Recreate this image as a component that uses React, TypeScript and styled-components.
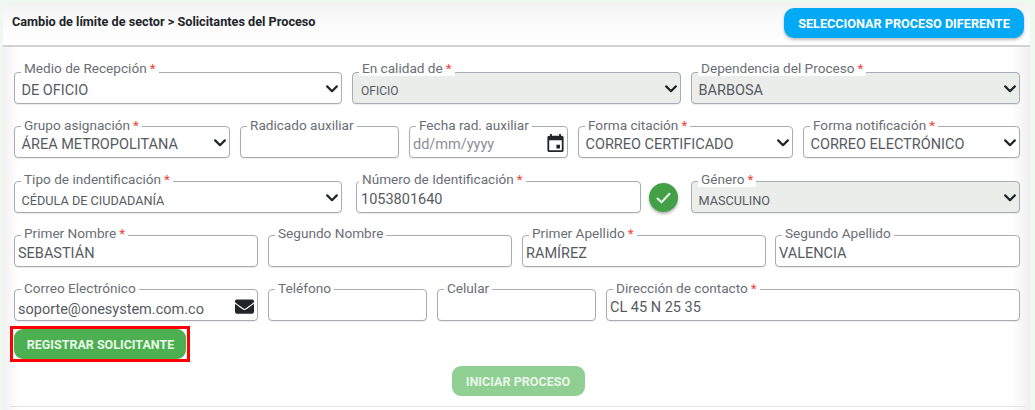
import React from 'react';
import styled, { createGlobalStyle } from 'styled-components';
import { FaEnvelope } from 'react-icons/fa';

const Global = createGlobalStyle`
  html, body { margin: 0; padding: 0; background: #eefaf0; }
  body { font-family: Roboto, "Liberation Sans", sans-serif; width: 1035px; height: 410px; overflow: hidden; }
  * { box-sizing: border-box; }
`;

const Panel = styled.div`
  margin: 3px 0 0 3px;
  width: 1027px;
  height: 407px;
  border-radius: 5px 5px 0 0;
  background: linear-gradient(90deg, #f1f1f1 0, #fff 16px, #fff 1008px, #f0f0f0 100%);
  display: flex;
  flex-direction: column;
`;

const Header = styled.header`
  height: 44px;
  flex: none;
  display: flex;
  justify-content: space-between;
  align-items: flex-start;
  padding: 5px 6px 0 9px;
  border-radius: 5px 5px 0 0;
  background: linear-gradient(180deg, #f3f3f3 0, #fcfcfc 60%, #fff 100%);
  border-bottom: 2px solid #d2d2d2;
`;

const Title = styled.h1`
  margin: 7px 0 0;
  font-size: 12.7px;
  line-height: 14px;
  font-weight: 700;
  color: #212529;
`;

const BlueButton = styled.button`
  width: 240px;
  height: 30px;
  border: 0;
  border-radius: 10px;
  background: #03a9f4;
  color: #fff;
  font: 700 12.66px Roboto, sans-serif;
  box-shadow: 0 2px 3px rgba(0,0,0,.25);
  padding: 0;
`;

const Body = styled.main`
  flex: 1;
  padding: 25px 10px 0 11px;
  display: flex;
  flex-direction: column;
`;

const Row = styled.div<{ $gap?: number; $mb?: number; $labelTop?: number }>`
  --label-top: ${p => p.$labelTop ?? -10}px;
  display: flex;
  gap: ${p => p.$gap ?? 10}px;
  margin-bottom: ${p => p.$mb ?? 22}px;
  height: 32px;
`;

const FieldBox = styled.div<{ $w: number; $off?: boolean; $ml?: number }>`
  position: relative;
  flex: none;
  width: ${p => p.$w}px;
  height: 32px;
  margin-left: ${p => p.$ml ?? 0}px;
  border: 1px solid #a9acb5;
  border-radius: 4px;
  box-shadow: 0 1px 1px rgba(0,0,0,.08);
  background: ${p => (p.$off ? '#eaedea' : '#fff')};
  display: flex;
  align-items: center;
`;

const Label = styled.label<{ $left?: number }>`
  position: absolute;
  left: ${p => p.$left ?? 6}px;
  top: var(--label-top);
  height: 15px;
  padding: 0 3px;
  background: #fff;
  font-size: 13.6px;
  line-height: 15px;
  color: #696e75;
  white-space: nowrap;
`;

const Star = styled.span`
  color: #f44336;
  margin-left: 3px;
`;

const Value = styled.span<{ $size?: number; $select?: boolean; $muted?: boolean; $drop?: number; $pad?: number }>`
  position: relative;
  top: ${p => p.$drop ?? (p.$size ? 3 : 2.5)}px;
  padding-left: ${p => p.$pad ?? (p.$select ? 6.5 : 3)}px;
  font-size: ${p => p.$size ?? 14.5}px;
  color: ${p => (p.$muted ? '#8a8f96' : '#565b62')};
  white-space: nowrap;
`;

const TrailingIcon = styled.span`
  position: absolute;
  right: 3px;
  top: 6px;
  height: 20px;
  display: flex;
  align-items: center;
  color: #212529;
`;

const ChevronWrap = styled.span`
  position: absolute;
  right: 3px;
  top: 12px;
  display: flex;
`;

const CheckBadge = styled.div`
  width: 29px;
  height: 29px;
  flex: none;
  margin: 2px -1px 0 -6px;
  border-radius: 50%;
  background: #43a047;
  box-shadow: 0 2px 3px rgba(0,0,0,.3);
  display: flex;
  align-items: center;
  justify-content: center;
`;

const Highlight = styled.div`
  width: 180px;
  height: 36px;
  flex: none;
  margin: -17px 0 0 -4px;
  border: 3px solid #ff0000;
  padding: 0 1px;
  display: flex;
`;

const GreenButton = styled.button`
  flex: 1;
  height: 30px;
  border: 0;
  border-radius: 9px;
  background: #4caf50;
  color: #e9f7ea;
  font: 700 12.5px Roboto, sans-serif;
  padding: 0 0 0 1px;
`;

const Center = styled.div`
  display: flex;
  justify-content: center;
  margin: 4px 0 0 2px;
`;

const FadedButton = styled.button`
  width: 133px;
  height: 30px;
  border: 0;
  border-radius: 9px;
  background: #90cf92;
  color: #e8f5e9;
  font: 700 12.6px Roboto, sans-serif;
  padding: 0;
`;

const Rule = styled.hr`
  margin: 10px 0 0 -5px;
  border: 0;
  height: 1px;
  width: 1016px;
  background: #e4e4e4;
`;

const Chevron = () => (
  <svg width="12" height="8" viewBox="0 0 12 8" fill="none">
    <path d="M1.2 1.4 6 6.2l4.8-4.8" stroke="#212529" strokeWidth="2.2" strokeLinecap="round" strokeLinejoin="round" />
  </svg>
);

const Calendar = () => (
  <svg width="17" height="18" viewBox="3 2 18 20" fill="#212529">
    <path d="M19 4h-1V2h-2v2H8V2H6v2H5c-1.1 0-2 .9-2 2v14c0 1.1.9 2 2 2h14c1.1 0 2-.9 2-2V6c0-1.1-.9-2-2-2zm0 16H5V9h14v11zm-6-6h4v4h-4z" />
  </svg>
);

type FieldProps = {
  w: number;
  label: string;
  req?: boolean;
  value?: string;
  select?: boolean;
  off?: boolean;
  size?: number;
  muted?: boolean;
  drop?: number;
  pad?: number;
  labelLeft?: number;
  ml?: number;
  icon?: React.ReactNode;
};

const Field = ({ w, label, req, value, select, off, size, muted, drop, pad, labelLeft, ml, icon }: FieldProps) => (
  <FieldBox $w={w} $off={off} $ml={ml}>
    <Label $left={labelLeft}>
      {label}
      {req && <Star>*</Star>}
    </Label>
    {value && (
      <Value $size={size} $select={select} $muted={muted} $drop={drop} $pad={pad}>
        {value}
      </Value>
    )}
    {select && (
      <ChevronWrap>
        <Chevron />
      </ChevronWrap>
    )}
    {icon && <TrailingIcon>{icon}</TrailingIcon>}
  </FieldBox>
);

export default function App() {
  return (
    <>
      <Global />
      <Panel>
        <Header>
          <Title>Cambio de límite de sector &gt; Solicitantes del Proceso</Title>
          <BlueButton>SELECCIONAR PROCESO DIFERENTE</BlueButton>
        </Header>
        <Body>
          <Row $labelTop={-12}>
            <Field w={328} label="Medio de Recepción" req value="DE OFICIO" select />
            <Field w={329} label="En calidad de" req value="OFICIO" select off size={12} pad={8} />
            <Field w={329} label="Dependencia del Proceso" req value="BARBOSA" select off />
          </Row>
          <Row $mb={23} $labelTop={-9}>
            <Field w={216} label="Grupo asignación" req value="ÁREA METROPOLITANA" select />
            <Field w={159} label="Radicado auxiliar" />
            <Field w={159} label="Fecha rad. auxiliar" value="dd/mm/yyyy" muted icon={<Calendar />} />
            <Field w={215} label="Forma citación" req value="CORREO CERTIFICADO" select />
            <Field w={217} label="Forma notificación" req value="CORREO ELECTRÓNICO" select />
          </Row>
          <Row $gap={14}>
            <Field w={328} label="Tipo de indentificación" req value="CÉDULA DE CIUDADANÍA" select size={12.7} />
            <Field w={285} label="Número de Identificación" req value="1053801640" labelLeft={2} pad={4} />
            <CheckBadge>
              <svg width="15" height="12" viewBox="0 0 15 12" fill="none">
                <path d="M1.5 6.5 5.5 10.3 13.5 1.7" stroke="#e8f5e9" strokeWidth="2" strokeLinecap="round" strokeLinejoin="round" />
              </svg>
            </CheckBadge>
            <Field w={329} label="Género" req value="MASCULINO" select off size={12.7} />
          </Row>
          <Row>
            <Field w={244} label="Primer Nombre" req value="SEBASTIÁN" />
            <Field w={244} label="Segundo Nombre" />
            <Field w={244} label="Primer Apellido" req value="RAMÍREZ" />
            <Field w={245} ml={-1} label="Segundo Apellido" value="VALENCIA" />
          </Row>
          <Row $labelTop={-9}>
            <Field w={244} label="Correo Electrónico" value="soporte@onesystem.com.co" drop={4} icon={<FaEnvelope size={19} />} />
            <Field w={159} label="Teléfono" />
            <Field w={159} label="Celular" />
            <Field w={414} label="Dirección de contacto" req value="CL 45 N 25 35" />
          </Row>
          <Highlight>
            <GreenButton>REGISTRAR SOLICITANTE</GreenButton>
          </Highlight>
          <Center>
            <FadedButton>INICIAR PROCESO</FadedButton>
          </Center>
          <Rule />
        </Body>
      </Panel>
    </>
  );
}
